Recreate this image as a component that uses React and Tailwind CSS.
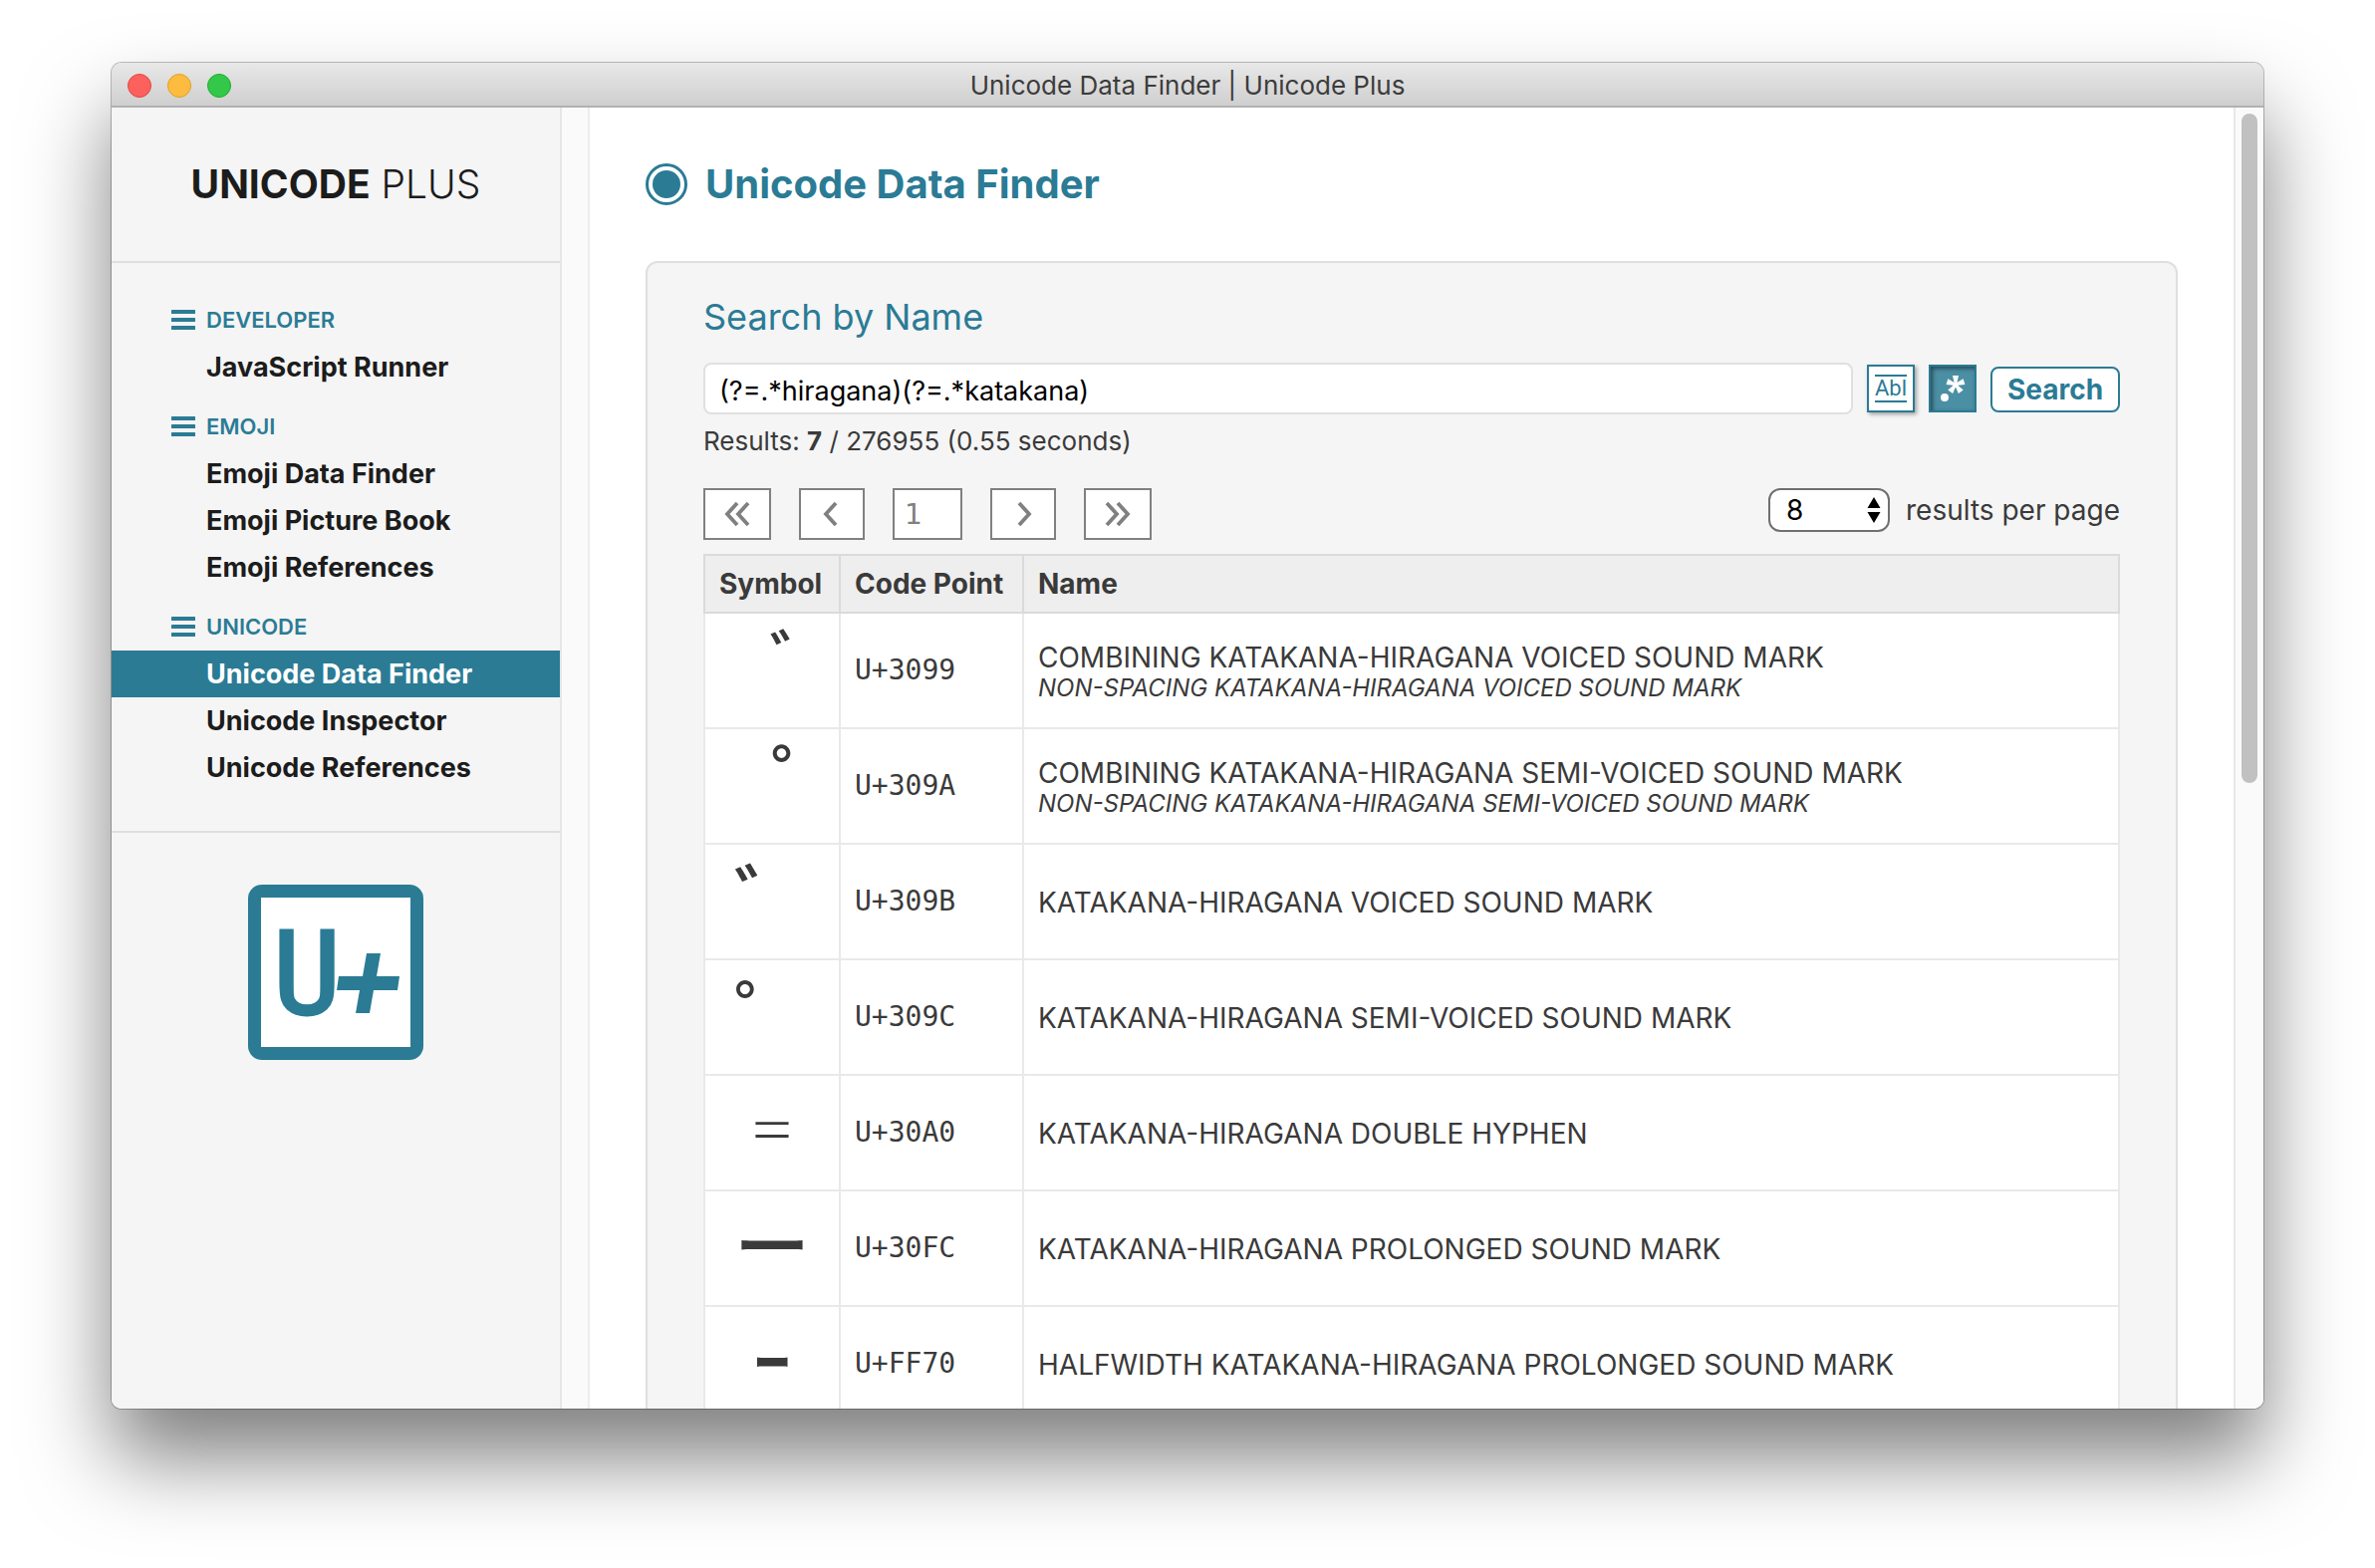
import React from "react";

const NAV = [
  { title: "DEVELOPER", items: ["JavaScript Runner"] },
  { title: "EMOJI", items: ["Emoji Data Finder", "Emoji Picture Book", "Emoji References"] },
  { title: "UNICODE", items: ["Unicode Data Finder", "Unicode Inspector", "Unicode References"] },
];
const ACTIVE = "Unicode Data Finder";

const ROWS = [
  { symbol: "\u00a0\u3099", combining: true, code: "U+3099", name: "COMBINING KATAKANA-HIRAGANA VOICED SOUND MARK", alias: "NON-SPACING KATAKANA-HIRAGANA VOICED SOUND MARK" },
  { symbol: "\u00a0\u309a", combining: true, code: "U+309A", name: "COMBINING KATAKANA-HIRAGANA SEMI-VOICED SOUND MARK", alias: "NON-SPACING KATAKANA-HIRAGANA SEMI-VOICED SOUND MARK" },
  { symbol: "\u309b", code: "U+309B", name: "KATAKANA-HIRAGANA VOICED SOUND MARK" },
  { symbol: "\u309c", code: "U+309C", name: "KATAKANA-HIRAGANA SEMI-VOICED SOUND MARK" },
  { symbol: "\u30a0", code: "U+30A0", name: "KATAKANA-HIRAGANA DOUBLE HYPHEN" },
  { symbol: "\u30fc", code: "U+30FC", name: "KATAKANA-HIRAGANA PROLONGED SOUND MARK" },
  { symbol: "\uff70", code: "U+FF70", name: "HALFWIDTH KATAKANA-HIRAGANA PROLONGED SOUND MARK" },
];

function TitleBar() {
  return (
    <header className="flex h-[45px] shrink-0 items-center border-b-2 border-[#b1b1b1] bg-linear-to-b from-[#e8e8e8] to-[#cfcfcf] px-4 pt-[2px]">
      <div className="flex flex-1 gap-4">
        <button aria-label="Close" className="size-6 rounded-full border border-[#e2463f] bg-[#fc615d]" />
        <button aria-label="Minimize" className="size-6 rounded-full border border-[#dfa023] bg-[#fdbc40]" />
        <button aria-label="Zoom" className="size-6 rounded-full border border-[#1dad2b] bg-[#34c84a]" />
      </div>
      <div className="text-[26px] text-[#3c3c3c]">Unicode Data Finder | Unicode Plus</div>
      <div className="flex-1" />
    </header>
  );
}

function MenuIcon() {
  return (
    <svg viewBox="0 0 24 20" className="h-5 w-6 fill-[#2b7b95]" aria-hidden="true">
      <rect width="24" height="4" rx="0.5" />
      <rect y="8" width="24" height="4" rx="0.5" />
      <rect y="16" width="24" height="4" rx="0.5" />
    </svg>
  );
}

function Logo() {
  return (
    <svg viewBox="0 0 176 176" className="size-44" role="img" aria-label="Unicode Plus logo">
      <rect width="176" height="176" rx="14" fill="#2b7b95" />
      <rect x="13" y="13" width="150" height="150" fill="#fff" />
      <text x="59" y="129" textAnchor="middle" fontSize="114" fontFamily="DejaVu Sans Mono, monospace" fill="#2b7b95" stroke="#2b7b95" strokeWidth="3">U</text>
      <path d="M119 69h14l-4 23h23l-2 14h-24l-4 23h-14l4-23h-23l2-14h24z" fill="#2b7b95" />
    </svg>
  );
}

function Sidebar() {
  return (
    <aside className="flex w-[452px] shrink-0 flex-col border-r-2 border-[#e6e6e6] bg-[#f5f5f5]">
      <div className="flex h-[156px] items-center justify-center border-b-2 border-[#dfdfdf] text-[39px] text-[#1c1c1c]">
        <a href="#home"><span className="font-bold">UNICODE</span> <span className="font-light">PLUS</span></a>
      </div>
      <nav className="flex flex-col gap-3 border-b-2 border-[#dfdfdf] pt-[33px] pb-10">
        {NAV.map((group) => (
          <section key={group.title}>
            <h2 className="flex h-12 items-center gap-[11px] pl-[60px] text-[22px] font-semibold text-[#2b7b95]">
              <MenuIcon />
              {group.title}
            </h2>
            <ul>
              {group.items.map((item) => (
                <li key={item}>
                  <a
                    href="#page"
                    className={
                      item === ACTIVE
                        ? "block bg-[#2b7b95] pl-[95px] text-[27px] leading-[47px] font-bold text-white"
                        : "block pl-[95px] text-[27px] leading-[47px] font-bold text-[#1c1c1c]"
                    }
                  >
                    {item}
                  </a>
                </li>
              ))}
            </ul>
          </section>
        ))}
      </nav>
      <div className="flex justify-center pt-13">
        <Logo />
      </div>
    </aside>
  );
}

function Chevrons({ d, label, wide }) {
  return (
    <button aria-label={label} className={wide ? "flex h-[52px] w-[68px] items-center justify-center border-2 border-[#808080] bg-white" : "flex h-[52px] w-[66px] items-center justify-center border-2 border-[#808080] bg-white"}>
      <svg viewBox="0 0 28 28" className="size-7 fill-none stroke-[#808080] stroke-[3.8]" aria-hidden="true">
        <path d={d} />
      </svg>
    </button>
  );
}

function SearchRow() {
  return (
    <div className="flex items-center gap-[14px]">
      <input
        id="query"
        aria-labelledby="search-title"
        defaultValue="(?=.*hiragana)(?=.*katakana)"
        className="h-[52px] min-w-0 flex-1 rounded-lg border-2 border-[#e0e0e0] bg-white px-[14px] pt-1 text-[27px] text-black outline-none"
      />
      <button aria-label="Whole word" className="flex size-12 items-center justify-center border-2 border-[#2b7b95] bg-white shadow-[2px_2px_4px_rgba(0,0,0,0.35)]">
        <span className="border-y-2 border-[#2b7b95] font-['Roboto',sans-serif] text-[22px] leading-6 text-[#2b7b95]">Abl</span>
      </button>
      <button aria-label="Regular expression" aria-pressed="true" className="flex size-12 items-center justify-center border-2 border-[#2b7b95] bg-[#4b8fa5] shadow-[inset_2px_2px_4px_rgba(0,0,0,0.5)]">
        <svg viewBox="0 0 48 48" className="size-12 shrink-0 fill-white" aria-hidden="true">
          <circle cx="16" cy="33" r="4" />
          <g id="spokes">
            <path d="M24 11h6l-2 9h-2z" />
            <path d="M24 11h6l-2 9h-2z" transform="rotate(72 27 20)" />
            <path d="M24 11h6l-2 9h-2z" transform="rotate(144 27 20)" />
            <path d="M24 11h6l-2 9h-2z" transform="rotate(216 27 20)" />
            <path d="M24 11h6l-2 9h-2z" transform="rotate(288 27 20)" />
            <circle cx="27" cy="20" r="2.5" />
          </g>
        </svg>
      </button>
      <button className="mt-[2px] h-[46px] w-[130px] rounded-lg border-2 border-[#2b7b95] bg-white text-[28px] leading-[38px] font-bold text-[#2b7b95]">Search</button>
    </div>
  );
}

function Pager() {
  return (
    <div className="flex items-start justify-between">
      <div className="flex gap-7">
        <Chevrons wide label="First page" d="M14 3L4 14L14 25M25 3L15 14L25 25" />
        <Chevrons label="Previous page" d="M18 3L8 14L18 25" />
        <input aria-label="Page" defaultValue="1" className="h-[52px] w-[70px] border-2 border-[#808080] bg-white px-[10px] font-['DejaVu_Sans',sans-serif] text-[28px] text-[#808080] outline-none" />
        <Chevrons label="Next page" d="M10 3L20 14L10 25" />
        <Chevrons wide label="Last page" d="M3 3L13 14L3 25M14 3L24 14L14 25" />
      </div>
      <label className="flex items-center gap-4 text-[28px] text-[#3a3a3a]">
        <span className="relative">
          <select defaultValue="8" className="block h-11 w-[122px] appearance-none rounded-xl border-2 border-[#707070] bg-white pl-4 text-[28px] leading-9 text-black outline-none">
            <option>8</option>
            <option>16</option>
            <option>32</option>
          </select>
          <svg viewBox="0 0 14 26" className="pointer-events-none absolute top-[9px] right-[9px] h-[26px] w-[14px]" aria-hidden="true">
            <path d="M7 0L13.5 11H.5zM7 26L.5 15h13z" />
          </svg>
        </span>
        results per page
      </label>
    </div>
  );
}

function ResultsTable() {
  return (
    <table className="mt-[14px] w-full table-fixed border-collapse text-left text-[#3a3a3a]">
      <colgroup>
        <col className="w-[136px]" />
        <col className="w-[184px]" />
        <col />
      </colgroup>
      <thead>
        <tr className="h-[58px] bg-[#eee] text-[28px]">
          {["Symbol", "Code Point", "Name"].map((h) => (
            <th key={h} className="border-2 border-[#dadada] px-[14px] py-0 font-bold whitespace-nowrap">{h}</th>
          ))}
        </tr>
      </thead>
      <tbody>
        {ROWS.map((row) => (
          <tr key={row.code} className="h-[116px] bg-white">
            <td
              className={
                row.combining
                  ? "border-2 border-[#e9e9e9] py-0 pr-0 pl-5 text-center align-top font-['Noto_Sans_CJK_JP',sans-serif] text-[76px] leading-[100px] font-medium"
                  : "border-2 border-[#e9e9e9] p-0 text-center align-top font-['Noto_Sans_CJK_JP',sans-serif] text-[76px] leading-[100px] font-medium"
              }
            >
              {row.symbol}
            </td>
            <td className="border-2 border-[#e9e9e9] px-[14px] py-0 font-['DejaVu_Sans_Mono',monospace] text-[28px]">{row.code}</td>
            <td className="border-2 border-[#e9e9e9] px-[14px] pt-[2px] pb-0 text-[28px] leading-[34px]">
              {row.name}
              {row.alias && <div className="text-[24px] leading-7 italic">{row.alias}</div>}
            </td>
          </tr>
        ))}
      </tbody>
    </table>
  );
}

export default function App() {
  return (
    <div className="h-screen overflow-hidden bg-white px-28 pt-[63px] pb-40 font-['Inter',sans-serif]">
      <div className="flex h-full flex-col overflow-hidden rounded-[10px] shadow-[0_0_0_1px_rgba(0,0,0,0.25),0_50px_84px_rgba(0,0,0,0.5)]">
        <TitleBar />
        <div className="flex min-h-0 flex-1 bg-white">
          <Sidebar />
          <div className="w-7 shrink-0 border-r-2 border-[#ececec] bg-[#fafafa]" />
          <main className="min-w-0 flex-1 overflow-hidden px-14">
            <div className="flex h-[154px] items-center gap-[18px]">
              <svg viewBox="0 0 42 42" className="size-[42px]" aria-hidden="true">
                <circle cx="21" cy="21" r="19.5" fill="#fff" stroke="#2b7b95" strokeWidth="3" />
                <circle cx="21" cy="21" r="14" fill="#2b7b95" />
              </svg>
              <h1 className="text-[40px] font-bold text-[#2b7b95]">Unicode Data Finder</h1>
            </div>
            <section className="rounded-xl border-2 border-[#dfdfdf] bg-[#f5f5f5] px-14 pt-[30px] pb-14">
              <h2 id="search-title" className="mb-[22px] text-[36px] leading-12 text-[#2b7b95]">Search by Name</h2>
              <SearchRow />
              <p className="mt-[9px] mb-[29px] text-[26px] leading-9 text-[#3a3a3a]">
                Results: <b>7</b> / 276955 (0.55 seconds)
              </p>
              <Pager />
              <ResultsTable />
            </section>
          </main>
          <div className="w-[30px] shrink-0 border-l-2 border-[#e8e8e8] bg-[#fafafa] px-[6px] pt-[6px]">
            <div className="h-[672px] rounded-full bg-[#c1c1c1]" />
          </div>
        </div>
      </div>
    </div>
  );
}
